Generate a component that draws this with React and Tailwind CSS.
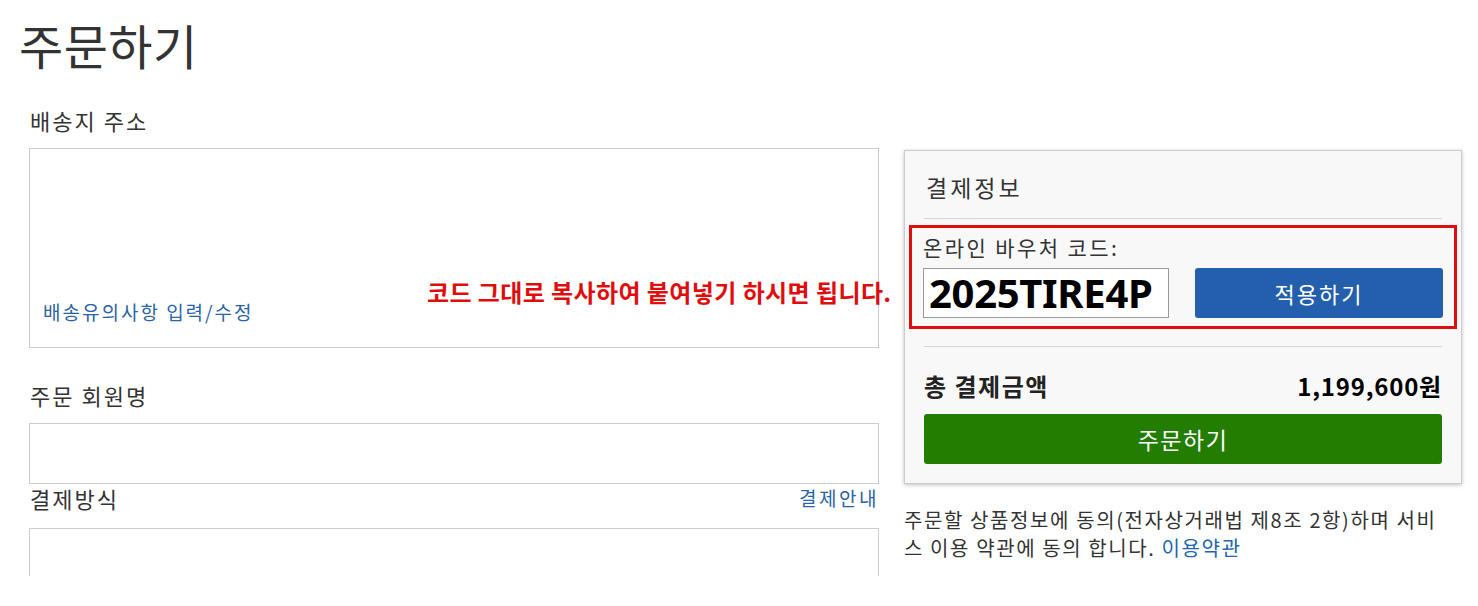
import React from "react";

// ── Left column pieces ────────────────────────────────────────────────────────

function SectionLabel({ children }) {
  return (
    <h3 className="pl-[1px] text-[22px] leading-[32px] tracking-[2px] text-[#333]">{children}</h3>
  );
}

function AddressBox() {
  return (
    <div className="mt-3 h-[200px] border border-[#ccc] bg-white flex flex-col justify-end px-[13px] pb-[22px]">
      <a className="text-[19px] leading-[26px] tracking-[2px] text-[#2a64a8] cursor-pointer">
        배송유의사항 입력/수정
      </a>
    </div>
  );
}

// ── Right column: payment summary ─────────────────────────────────────────────

function VoucherBlock() {
  return (
    <div className="mt-[6px] -mx-[15px] border-[3px] border-[#e00d0d] px-[11px] pt-[5px] pb-[8px]">
      <p className="text-[21px] leading-[28px] tracking-[2.4px] text-[#333]">온라인 바우처 코드:</p>
      <div className="mt-[7px] flex items-center gap-[26px]">
        <div className="w-[246px] h-[50px] border border-[#999] bg-white flex items-center pl-[5px]">
          <span className="font-['Noto_Sans',sans-serif] font-bold text-[40px] leading-none text-black tracking-[-0.3px] whitespace-nowrap">
            2025TIRE4P
          </span>
        </div>
        <button className="flex-1 h-[50px] rounded-[3px] bg-[#235fad] text-white text-[22px] tracking-[2px]">
          적용하기
        </button>
      </div>
    </div>
  );
}

function PaymentPanel() {
  return (
    <div className="h-[334px] border border-[#ccc] bg-[#f8f8f8] shadow-[0_1px_4px_rgba(0,0,0,0.25)] px-[19px] pt-[20px]">
      <h3 className="text-[23px] leading-[32px] tracking-[3px] text-[#333] pl-[2px]">결제정보</h3>
      <div className="mt-[15px] h-px bg-[#d4d4d4]" />
      <VoucherBlock />
      <div className="mt-[17px] h-px bg-[#d4d4d4]" />
      <div className="mt-[23px] flex items-center justify-between">
        <span className="text-[24px] leading-[32px] tracking-[1.5px] font-bold text-[#222]">총 결제금액</span>
        <span className="text-[24px] leading-[32px] tracking-[0.8px] font-bold text-black">1,199,600원</span>
      </div>
      <button className="mt-[12px] w-full h-[50px] rounded-[3px] bg-[#237d00] text-white text-[23px] tracking-[1.5px]">
        주문하기
      </button>
    </div>
  );
}

// ── Main component ────────────────────────────────────────────────────────────

export default function App() {
  return (
    <div className="w-[1478px] h-[606px] overflow-hidden bg-white font-['Noto_Sans_CJK_KR',sans-serif] text-[#333]">
      <h1 className="pt-4 pl-[19px] text-[48px] leading-[56px] tracking-[0.5px] text-[#333]">주문하기</h1>

      <div className="relative mt-8 flex">
        {/* Left column */}
        <div className="ml-[29px] w-[850px]">
          <SectionLabel>배송지 주소</SectionLabel>
          <AddressBox />

          <div className="mt-[31px]">
            <SectionLabel>주문 회원명</SectionLabel>
          </div>
          <div className="mt-3 h-[61px] border border-[#ccc] bg-white" />

          <div className="flex items-center justify-between h-[28px]">
            <SectionLabel>결제방식</SectionLabel>
            <a className="text-[19px] leading-[28px] tracking-[2.5px] text-[#2a64a8] cursor-pointer">결제안내</a>
          </div>
          <div className="mt-4 h-[48px] border border-b-0 border-[#ccc] bg-white" />
        </div>

        {/* Right column */}
        <div className="ml-[25px] w-[558px] pt-[46px]">
          <PaymentPanel />
          <p className="mt-[22px] w-[540px] text-[20px] leading-[28px] tracking-[1.6px] text-[#333] break-all">
            주문할 상품정보에 동의(전자상거래법 제8조 2항)하며 서비스 이용 약관에 동의 합니다.{" "}
            <a className="text-[#2366ae] cursor-pointer">이용약관</a>
          </p>
        </div>

        {/* Annotation overlay */}
        <p className="absolute left-[427px] top-[172px] text-[24px] leading-[32px] font-bold tracking-[0.4px] text-[#e00d0d] whitespace-nowrap">
          코드 그대로 복사하여 붙여넣기 하시면 됩니다.
        </p>
      </div>
    </div>
  );
}
